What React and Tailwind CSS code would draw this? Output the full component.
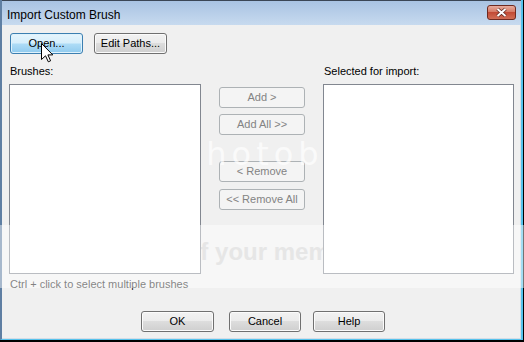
import React from "react";

function Btn({ children, className = "" }) {
  return (
    <div
      className={`flex h-[21px] items-center justify-center rounded-[3px] border border-[#707070] bg-[linear-gradient(to_bottom,#f2f2f2_0%,#ebebeb_50%,#dddddd_50%,#cfcfcf_100%)] text-[11px] text-black shadow-[inset_0_0_0_1px_#fbfbfb] ${className}`}
    >
      {children}
    </div>
  );
}

function DisabledBtn({ children, className = "" }) {
  return (
    <div
      className={`flex h-[21px] w-[86px] items-center justify-center rounded-[3px] border border-[#adb2b5] bg-[#f4f4f4] text-[11px] text-[#838383] ${className}`}
    >
      {children}
    </div>
  );
}

function CloseButton() {
  return (
    <svg width="29" height="15" viewBox="0 0 29 15">
      <defs>
        <linearGradient id="closeGrad" x1="0" y1="0" x2="0" y2="1">
          <stop offset="0" stopColor="#eab0a3" />
          <stop offset="0.45" stopColor="#d57a66" />
          <stop offset="0.5" stopColor="#c24b36" />
          <stop offset="1" stopColor="#d27058" />
        </linearGradient>
      </defs>
      <rect x="0.5" y="0.5" width="28" height="14" rx="2.5" fill="url(#closeGrad)" stroke="#6e2a21" />
      <path d="M10.5 4 L18.5 11 M18.5 4 L10.5 11" stroke="#5b2720" strokeWidth="3.6" />
      <path d="M10.5 4 L18.5 11 M18.5 4 L10.5 11" stroke="#ffffff" strokeWidth="2" />
    </svg>
  );
}

function Cursor() {
  return (
    <svg width="13" height="20" viewBox="0 0 13 20">
      <path
        d="M0.5 0.5 L0.5 16.5 L4.5 12.8 L7.3 18.8 L9.6 17.8 L6.9 11.9 L11.8 11.9 Z"
        fill="#ffffff"
        stroke="#000000"
        strokeWidth="1"
        strokeLinejoin="round"
      />
    </svg>
  );
}

export default function App() {
  return (
    <div className="relative h-[342px] w-[524px] overflow-hidden bg-black font-['Liberation_Sans',Arial,sans-serif] text-[11px] text-black">
      <div className="flex h-[340px] w-[523px] flex-col border-b border-l-2 border-r-2 border-b-[#56c2ec] border-l-[#5f7fa3] border-r-[#56c2ec]">
        {/* title bar */}
        <div className="flex h-[25px] items-start border-t border-t-[#3b4656] bg-[linear-gradient(to_bottom,#a9c3e3,#c7daef)]">
          <div className="pl-[5px] pt-[7px] text-[12px] leading-[14px] text-black">Import Custom Brush</div>
          <div className="ml-auto mr-[5px] mt-[4px] flex">
            <CloseButton />
          </div>
        </div>

        {/* body */}
        <div className="flex-1 border-b border-r border-b-[#d5dde6] border-r-[#d5dde6] bg-[#f0f0f0]">
          <div className="flex gap-[11px] pl-[8px] pt-[8px]">
            <div className="flex h-[21px] w-[73px] items-center justify-center rounded-[3px] border border-[#3c7fb1] bg-[linear-gradient(to_bottom,#e6f5fd_0%,#d5eefb_48%,#aedcf6_52%,#8fcaee_100%)] text-[11px] shadow-[inset_0_0_0_1px_#dff2fc]">
              Open...
            </div>
            <Btn className="w-[73px]">Edit Paths...</Btn>
          </div>

          <div className="mt-[10px] flex pl-[7px]">
            <div className="w-[192px]">
              <div className="h-[20px] pl-[1px] leading-[14px]">Brushes:</div>
              <div className="h-[190px] border border-[#828790] bg-white" />
              <div className="mt-[3px] pl-[1px] leading-[14px] text-[#1a1a1a]">Ctrl + click to select multiple brushes</div>
            </div>

            <div className="ml-[18px] mt-[23px] flex w-[86px] flex-col">
              <DisabledBtn>Add &gt;</DisabledBtn>
              <DisabledBtn className="mt-[6px]">Add All &gt;&gt;</DisabledBtn>
              <DisabledBtn className="mt-[26px]">&lt; Remove</DisabledBtn>
              <DisabledBtn className="mt-[7px]">&lt;&lt; Remove All</DisabledBtn>
            </div>

            <div className="ml-[18px] w-[191px]">
              <div className="h-[20px] pl-[1px] leading-[14px]">Selected for import:</div>
              <div className="h-[190px] border border-[#828790] bg-white" />
            </div>
          </div>

          <div className="mt-[20px] flex pl-[139px]">
            <Btn className="w-[73px]">OK</Btn>
            <Btn className="ml-[15px] w-[72px]">Cancel</Btn>
            <Btn className="ml-[12px] w-[72px]">Help</Btn>
          </div>
        </div>
      </div>

      {/* photobucket watermark, visible only over the grey middle strip */}
      <div className="pointer-events-none absolute left-0 top-[225px] h-[63px] w-[524px] bg-white/45" />
      <div className="pointer-events-none absolute left-[201px] top-[120px] h-[168px] w-[122px] overflow-hidden">
        <div className="absolute left-[-20px] top-[18px] whitespace-nowrap font-['DejaVu_Sans',sans-serif] text-[32px] leading-[32px] tracking-[5px] text-white/70">
          photobucket
        </div>
        <div className="absolute left-[-170px] top-[120px] whitespace-nowrap text-[24px] font-bold leading-[24px] text-[#e6e6e6]">
          Protect more of your memories for less!
        </div>
      </div>

      <div className="pointer-events-none absolute left-[41px] top-[43px]">
        <Cursor />
      </div>
    </div>
  );
}
